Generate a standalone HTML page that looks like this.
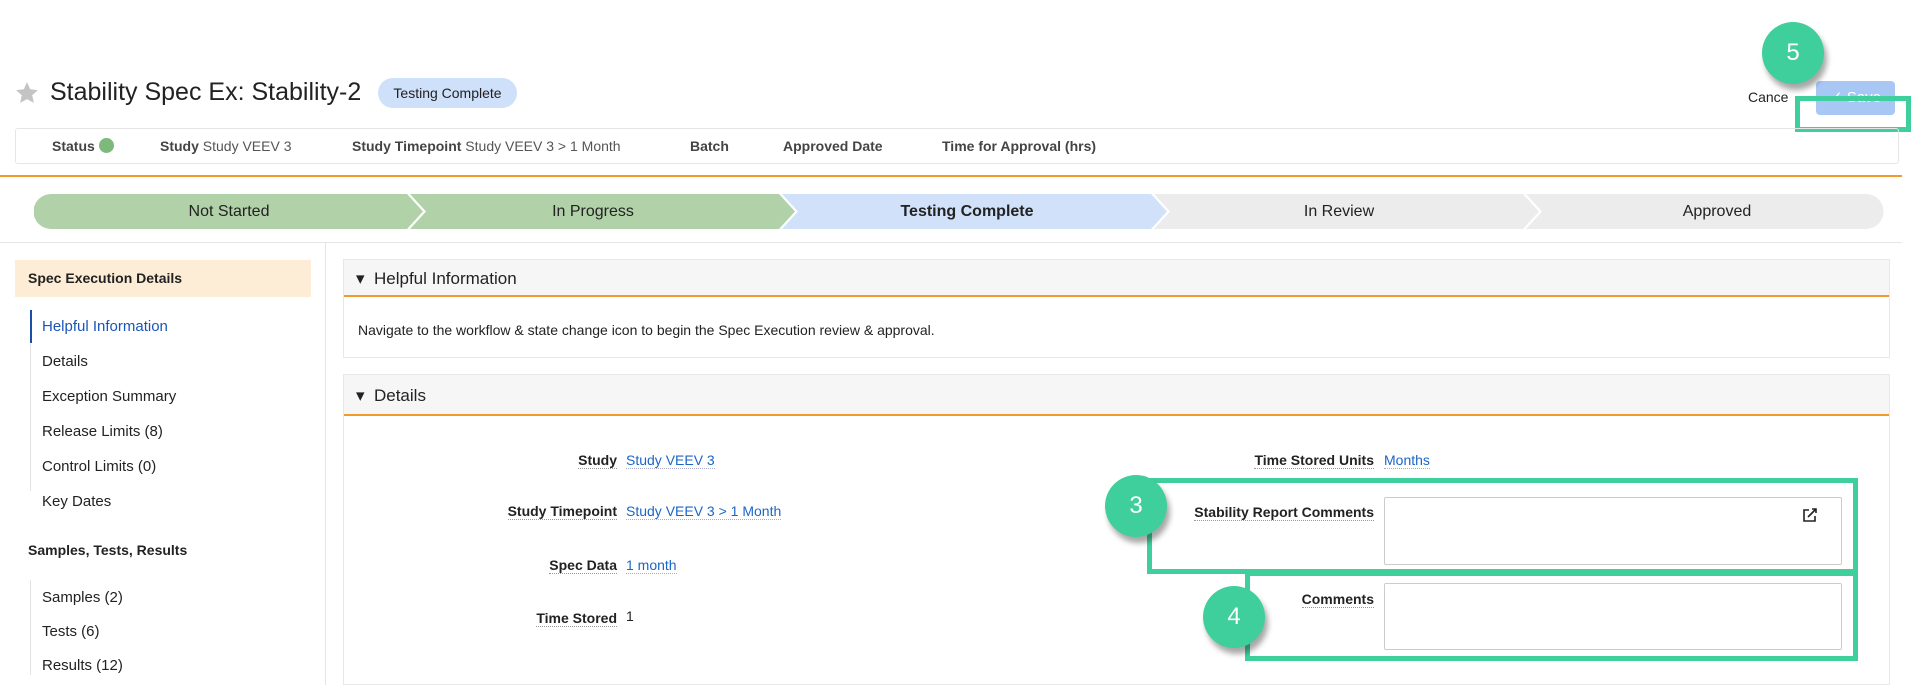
<!DOCTYPE html>
<html><head><meta charset="utf-8"><style>
*{box-sizing:border-box;margin:0;padding:0}
body{width:1920px;height:685px;overflow:hidden;background:#fff;font-family:"Liberation Sans",Arial,sans-serif;color:#222;position:relative}
.a{position:absolute}
.lbl{font-weight:bold;font-size:14px;border-bottom:1px dotted #999;white-space:nowrap}
.val{color:#1a66c8;font-size:14px;border-bottom:1px dotted #aac;white-space:nowrap}
.nav{position:absolute;left:42px;font-size:15px;color:#222}
.circ{position:absolute;width:62px;height:62px;border-radius:50%;background:#3fcf9c;color:#fff;font-size:24px;text-align:center;line-height:62px;box-shadow:3px 6px 6px rgba(0,0,0,.35)}
.gbox{position:absolute;border:5px solid #3fcf9c}
.step{position:absolute;top:194px;height:35px;line-height:35px;text-align:center;font-size:16px}
</style></head><body>
<svg class="a" style="left:14px;top:80px" width="26" height="26" viewBox="0 0 24 24"><path d="M12 2l3 6.5 7 .8-5.2 4.8 1.5 7L12 17.6 5.7 21.1l1.5-7L2 9.3l7-.8z" fill="#c4c4c4"/></svg>
<div class="a" style="left:50px;top:78px;font-size:25px;color:#222">Stability Spec Ex: Stability-2</div>
<div class="a" style="left:378px;top:78px;width:139px;height:30px;border-radius:15px;background:#cfe0fa;font-size:14px;line-height:30px;text-align:center">Testing Complete</div>

<div class="a" style="left:1748px;top:89px;font-size:14px">Cance</div>
<div class="a" style="left:1816px;top:81px;width:79px;height:34px;border-radius:4px;background:#a9c7f5;color:#fff;font-size:15px;line-height:34px;text-align:center">✓ Save</div>
<div class="gbox" style="left:1795px;top:96px;width:116px;height:36px"></div>
<div class="circ" style="left:1762px;top:22px">5</div>

<div class="a" style="left:15px;top:128px;width:1884px;height:36px;border:1px solid #e6e6e6;border-radius:3px"></div>
<div class="a" style="top:138px;left:52px;font-size:14px;color:#444"><b>Status</b> <span style="display:inline-block;width:15px;height:15px;border-radius:50%;background:#7cb97b;vertical-align:-2px"></span></div>
<div class="a" style="top:138px;left:160px;font-size:14px;color:#555"><b style="color:#444">Study</b> Study VEEV 3</div>
<div class="a" style="top:138px;left:352px;font-size:14px;color:#555"><b style="color:#444">Study Timepoint</b> Study VEEV 3 &gt; 1 Month</div>
<div class="a" style="top:138px;left:690px;font-size:14px;color:#444"><b>Batch</b></div>
<div class="a" style="top:138px;left:783px;font-size:14px;color:#444"><b>Approved Date</b></div>
<div class="a" style="top:138px;left:942px;font-size:14px;color:#444"><b>Time for Approval (hrs)</b></div>
<div class="a" style="left:0;top:175px;width:1902px;height:2px;background:#f39a2e"></div>

<svg class="a" style="left:34px;top:194px" width="1860" height="35">
<path d="M17 0H373L389 17.5 373 35H17A17 17 0 0 1 17 0Z" fill="#b1d2a8"/>
<path d="M376 0H745L761 17.5 745 35H376L392 17.5Z" fill="#b1d2a8"/>
<path d="M748 0H1117L1133 17.5 1117 35H748L764 17.5Z" fill="#d0e1f9"/>
<path d="M1120 0H1489L1505 17.5 1489 35H1120L1136 17.5Z" fill="#ececec"/>
<path d="M1492 0H1832A17 17 0 0 1 1832 35H1492L1508 17.5Z" fill="#ececec"/>
</svg>
<div class="step" style="left:34px;width:390px">Not Started</div>
<div class="step" style="left:408px;width:370px">In Progress</div>
<div class="step" style="left:782px;width:370px;font-weight:bold">Testing Complete</div>
<div class="step" style="left:1154px;width:370px">In Review</div>
<div class="step" style="left:1532px;width:370px">Approved</div>
<div class="a" style="left:0;top:242px;width:1902px;height:1px;background:#e6e6e6"></div>

<div class="a" style="left:15px;top:260px;width:296px;height:37px;background:#fdedd6;font-size:14px;font-weight:bold;line-height:37px;padding-left:13px">Spec Execution Details</div>
<div class="a" style="left:30px;top:310px;width:1px;height:181px;background:#e2e2e2"></div>
<div class="a" style="left:30px;top:310px;width:2px;height:33px;background:#1a4fa8"></div>
<div class="nav" style="top:318px;color:#1a55b8">Helpful Information</div>
<div class="nav" style="top:353px">Details</div>
<div class="nav" style="top:388px">Exception Summary</div>
<div class="nav" style="top:423px">Release Limits (8)</div>
<div class="nav" style="top:458px">Control Limits (0)</div>
<div class="nav" style="top:493px">Key Dates</div>
<div class="a" style="left:28px;top:542px;font-size:14px;font-weight:bold">Samples, Tests, Results</div>
<div class="a" style="left:30px;top:580px;width:1px;height:105px;background:#e2e2e2"></div>
<div class="nav" style="top:589px">Samples (2)</div>
<div class="nav" style="top:623px">Tests (6)</div>
<div class="nav" style="top:657px">Results (12)</div>
<div class="a" style="left:0;top:675px;width:340px;height:10px;background:#fff"></div>
<div class="a" style="left:325px;top:243px;width:1px;height:442px;background:#e6e6e6"></div>

<div class="a" style="left:343px;top:259px;width:1547px;height:99px;border:1px solid #e8e8e8"></div>
<div class="a" style="left:344px;top:260px;width:1545px;height:37px;background:#f6f6f6;border-bottom:2px solid #f39a2e"></div>
<div class="a" style="left:356px;top:269px;font-size:17px">▾&nbsp; Helpful Information</div>
<div class="a" style="left:358px;top:322px;font-size:14px">Navigate to the workflow &amp; state change icon to begin the Spec Execution review &amp; approval.</div>

<div class="a" style="left:343px;top:374px;width:1547px;height:311px;border:1px solid #e8e8e8"></div>
<div class="a" style="left:344px;top:375px;width:1545px;height:41px;background:#f6f6f6;border-bottom:2px solid #f39a2e"></div>
<div class="a" style="left:356px;top:386px;font-size:17px">▾&nbsp; Details</div>

<div class="a lbl" style="right:1303px;top:452px">Study</div><div class="a val" style="left:626px;top:452px">Study VEEV 3</div>
<div class="a lbl" style="right:1303px;top:503px">Study Timepoint</div><div class="a val" style="left:626px;top:503px">Study VEEV 3 &gt; 1 Month</div>
<div class="a lbl" style="right:1303px;top:557px">Spec Data</div><div class="a val" style="left:626px;top:557px">1 month</div>
<div class="a lbl" style="right:1303px;top:610px">Time Stored</div><div class="a" style="left:626px;top:608px;font-size:14px">1</div>

<div class="a lbl" style="right:546px;top:452px">Time Stored Units</div><div class="a val" style="left:1384px;top:452px">Months</div>
<div class="a lbl" style="right:546px;top:504px">Stability Report Comments</div>
<div class="a" style="left:1384px;top:497px;width:458px;height:68px;border:1px solid #ccc;border-radius:2px"></div>
<svg class="a" style="left:1802px;top:507px" width="16" height="16" viewBox="0 0 16 16"><path d="M7 3H2v11h11V9" fill="none" stroke="#222" stroke-width="1.6"/><path d="M6 10l8-8M10 2h4v4" fill="none" stroke="#222" stroke-width="1.6"/></svg>
<div class="a lbl" style="right:546px;top:591px">Comments</div>
<div class="a" style="left:1384px;top:583px;width:458px;height:67px;border:1px solid #ccc;border-radius:2px"></div>

<div class="gbox" style="left:1147px;top:478px;width:711px;height:96px"></div>
<div class="gbox" style="left:1245px;top:571px;width:613px;height:90px"></div>
<div class="circ" style="left:1105px;top:475px">3</div>
<div class="circ" style="left:1203px;top:586px">4</div>
</body></html>
